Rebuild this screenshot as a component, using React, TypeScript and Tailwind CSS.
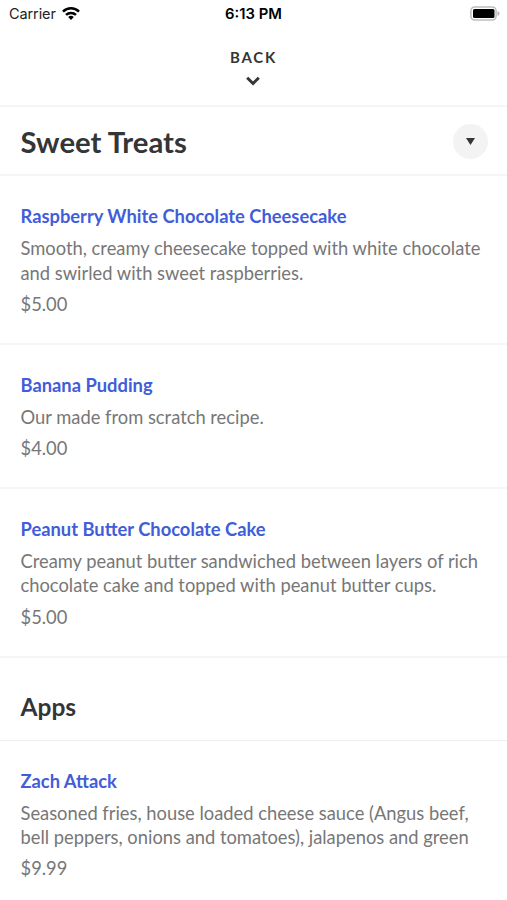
interface MenuItem {
  name: string;
  lines: string[];
  price: string;
}

const sweetTreats: MenuItem[] = [
  {
    name: "Raspberry White Chocolate Cheesecake",
    lines: [
      "Smooth, creamy cheesecake topped with white chocolate",
      "and swirled with sweet raspberries.",
    ],
    price: "$5.00",
  },
  {
    name: "Banana Pudding",
    lines: ["Our made from scratch recipe."],
    price: "$4.00",
  },
  {
    name: "Peanut Butter Chocolate Cake",
    lines: [
      "Creamy peanut butter sandwiched between layers of rich",
      "chocolate cake and topped with peanut butter cups.",
    ],
    price: "$5.00",
  },
];

const apps: MenuItem[] = [
  {
    name: "Zach Attack",
    lines: [
      "Seasoned fries, house loaded cheese sauce (Angus beef,",
      "bell peppers, onions and tomatoes), jalapenos and green",
    ],
    price: "$9.99",
  },
];

function StatusBar() {
  return (
    <div className="grid h-[27px] grid-cols-3 items-center pl-[9px] pr-[7px] font-['Inter',sans-serif] text-black">
      <div className="flex items-center gap-[6px]">
        <span className="text-[14.5px] tracking-[-0.1px] text-[#222]">Carrier</span>
        <svg width="18" height="13" viewBox="0 0 18 13" fill="none" stroke="black" strokeWidth="2.5">
          <path d="M1 4.6a11.4 11.4 0 0 1 16 0" />
          <path d="M4 7.9a7.2 7.2 0 0 1 10 0" />
          <path d="M9 13 6.2 10.1a4 4 0 0 1 5.6 0Z" fill="black" stroke="none" />
        </svg>
      </div>
      <span className="-ml-[2px] pt-[2px] text-center text-[14.8px] font-semibold">6:13 PM</span>
      <svg className="justify-self-end" width="30" height="15" viewBox="0 0 30 15">
        <rect x="0.9" y="0.9" width="25.2" height="13.2" rx="3.8" fill="none" stroke="#bdbdbd" strokeWidth="1.5" />
        <rect x="3" y="3" width="21.5" height="9" rx="1.5" fill="black" />
        <path d="M27.5 5c2.8 1 2.8 4 0 5Z" fill="#b5b5b5" />
      </svg>
    </div>
  );
}

function MenuRow({ item }: { item: MenuItem }) {
  return (
    <article className="border-b-2 border-[#f6f6f6] px-[20.5px] pb-[25.7px] pt-[28px]">
      <h3 className="text-[18.33px] font-bold leading-[25px] text-[#415dd9]">{item.name}</h3>
      <div className="mt-[7px] text-[18.33px] leading-[24.4px] text-[#777]">
        {item.lines.map((line) => (
          <p key={line} className="whitespace-nowrap">
            {line}
          </p>
        ))}
      </div>
      <p className="mt-[7.1px] text-[18.33px] leading-[25px] text-[#777]">{item.price}</p>
    </article>
  );
}

export default function App() {
  return (
    <div className="h-[900px] w-full overflow-hidden bg-white font-['Lato',sans-serif] text-[#333536]">
      <StatusBar />

      <header className="flex h-20 flex-col items-center border-b-2 border-[#f6f6f6] pr-[2px] pt-5">
        <span className="pl-[2px] text-[15px] font-bold leading-5 tracking-[1.8px]">BACK</span>
        <svg className="mt-[9px]" width="14" height="10" viewBox="0 0 14 10" fill="none" stroke="currentColor" strokeWidth="3">
          <path d="M1.2 1.8 7 7.5 12.8 1.8" />
        </svg>
      </header>

      <div className="flex h-[69.2px] items-center justify-between border-b-2 border-[#f6f6f6] pl-[20.5px] pr-[19px]">
        <h1 className="pt-[2px] text-[29.3px] font-bold leading-9">Sweet Treats</h1>
        <button className="mt-[2px] flex size-[35px] items-center justify-center rounded-full bg-[#f3f3f3]">
          <svg width="9" height="7" viewBox="0 0 9 7" fill="currentColor">
            <path d="M0 0h9L4.5 7Z" />
          </svg>
        </button>
      </div>

      {sweetTreats.map((item) => (
        <MenuRow key={item.name} item={item} />
      ))}

      <div className="flex h-[83px] items-center border-b border-[#eee] px-[20.5px] pt-[16px]">
        <h2 className="text-[24.5px] font-bold leading-8">Apps</h2>
      </div>

      {apps.map((item) => (
        <MenuRow key={item.name} item={item} />
      ))}
    </div>
  );
}
